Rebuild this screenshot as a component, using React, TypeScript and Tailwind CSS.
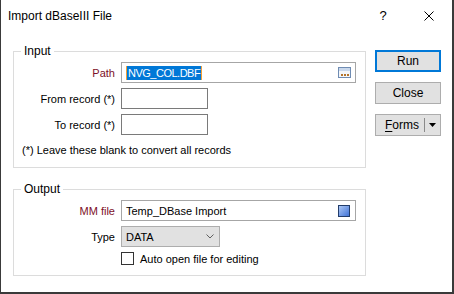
import React from "react";

function DotsIcon() {
  return (
    <svg width="13" height="11" viewBox="0 0 13 11">
      <rect x="0.5" y="0.5" width="12" height="10" fill="#f3f6fa" stroke="#6f8cb3" />
      <rect x="1" y="1" width="11" height="3" fill="#c9d8ec" />
      <rect x="3" y="7" width="2" height="2" fill="#b4742c" />
      <rect x="6" y="7" width="2" height="2" fill="#b4742c" />
      <rect x="9" y="7" width="2" height="2" fill="#b4742c" />
    </svg>
  );
}

function ColourIcon() {
  return (
    <svg width="12" height="12" viewBox="0 0 12 12">
      <defs>
        <linearGradient id="mmg" x1="0" y1="0" x2="1" y2="1">
          <stop offset="0" stopColor="#b3cdf7" />
          <stop offset="1" stopColor="#3b6fd6" />
        </linearGradient>
      </defs>
      <rect x="0.5" y="0.5" width="11" height="11" fill="url(#mmg)" stroke="#233d6b" />
    </svg>
  );
}

function Row({ label, red, children }: { label: string; red?: boolean; children: React.ReactNode }) {
  return (
    <div className="flex items-center gap-[6px]">
      <span className={`w-[101px] text-right ${red ? "text-[#7d1028]" : "text-black"}`}>{label}</span>
      {children}
    </div>
  );
}

export default function App() {
  return (
    <div className="w-[454px] h-[294px] bg-white border-l border-r-2 border-b-2 border-[#3a3a3a] flex flex-col font-['Liberation_Sans',Arial,sans-serif] text-[11px] leading-[16px] text-black">
      {/* Title bar */}
      <div className="h-[31px] flex items-center shrink-0 text-[12px]">
        <span className="pl-[7px] flex-1">Import dBaseIII File</span>
        <span className="w-[46px] text-center text-[13px]">?</span>
        <span className="w-[46px] flex justify-center">
          <svg width="10" height="10" viewBox="0 0 10 10">
            <path d="M0.5 0.5 L9.5 9.5 M9.5 0.5 L0.5 9.5" stroke="#000" strokeWidth="1" />
          </svg>
        </span>
      </div>

      <div className="flex flex-1 pl-[12px]">
        {/* Groups */}
        <div className="w-[353px] flex flex-col gap-[13px] pt-[12px]">
          <fieldset className="border border-[#dcdcdc] pb-[9px]">
            <legend className="ml-[7px] px-[3px] text-[12px]">Input</legend>
            <div className="flex flex-col gap-[5px] pt-[3px]">
              <Row label="Path" red>
                <div className="w-[235px] h-[21px] border border-[#a6a6a6] flex items-center pl-[4px] pr-[4px]">
                  <span className="w-px h-[14px] bg-[#f5a033]" />
                  <span className="bg-[#0078d7] text-white leading-[14px] px-px tracking-[-0.5px]">NVG_COL.DBF</span>
                  <span className="w-px h-[14px] bg-[#f5a033]" />
                  <span className="ml-auto flex">
                    <DotsIcon />
                  </span>
                </div>
              </Row>
              <Row label="From record (*)">
                <div className="w-[87px] h-[21px] border border-[#7a7a7a]" />
              </Row>
              <Row label="To record (*)">
                <div className="w-[87px] h-[21px] border border-[#7a7a7a]" />
              </Row>
            </div>
            <p className="pl-[8px] mt-[7px]">(*) Leave these blank to convert all records</p>
          </fieldset>

          <fieldset className="border border-[#dcdcdc] pb-[10px]">
            <legend className="ml-[7px] px-[3px] text-[12px]">Output</legend>
            <div className="flex flex-col gap-[5px] pt-[3px]">
              <Row label="MM file" red>
                <div className="w-[235px] h-[21px] border border-[#a6a6a6] flex items-center pl-[4px] pr-[5px]">
                  <span>Temp_DBase Import</span>
                  <span className="ml-auto flex">
                    <ColourIcon />
                  </span>
                </div>
              </Row>
              <Row label="Type">
                <div className="w-[99px] h-[21px] border border-[#adadad] bg-[#e1e1e1] flex items-center pl-[4px] pr-[5px]">
                  <span>DATA</span>
                  <svg className="ml-auto" width="8" height="5" viewBox="0 0 8 5">
                    <path d="M0.5 0.5 L4 4 L7.5 0.5" fill="none" stroke="#606060" strokeWidth="1" />
                  </svg>
                </div>
              </Row>
              <div className="flex items-center gap-[6px] ml-[107px] h-[13px]">
                <span className="w-[13px] h-[13px] border border-[#333333] bg-white" />
                <span>Auto open file for editing</span>
              </div>
            </div>
          </fieldset>
        </div>

        {/* Buttons */}
        <div className="w-[66px] ml-[9px] pt-[19px] flex flex-col gap-[10px] text-[12px]">
          <button className="h-[22px] border-2 border-[#0078d7] bg-[#e1e1e1]">Run</button>
          <button className="h-[22px] border border-[#adadad] bg-[#e1e1e1]">Close</button>
          <button className="h-[22px] border border-[#adadad] bg-[#e1e1e1] flex items-center">
            <span className="w-[48px] text-right pr-[5px]">
              <span className="underline underline-offset-2">F</span>orms
            </span>
            <span className="w-px h-[14px] bg-[#8a8a8a]" />
            <span className="flex-1 flex justify-center">
              <svg width="7" height="4" viewBox="0 0 7 4">
                <path d="M0 0 L7 0 L3.5 4 Z" fill="#000" />
              </svg>
            </span>
          </button>
        </div>
      </div>
    </div>
  );
}
